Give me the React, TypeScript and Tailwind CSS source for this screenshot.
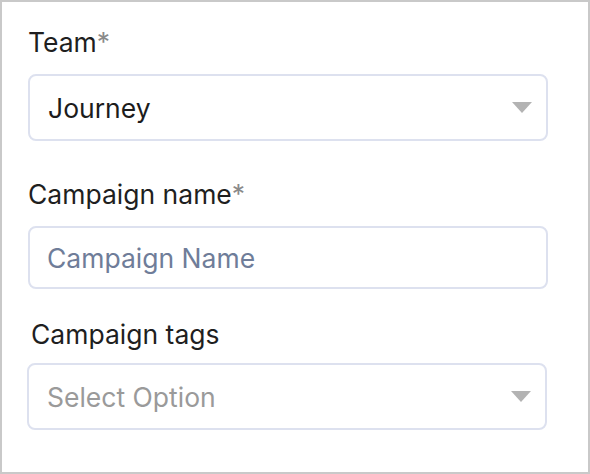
import React from "react"

function Caret() {
  return (
    <svg width="20" height="11" viewBox="0 0 20 11" className="shrink-0">
      <path d="M0 0 L20 0 L10 11 Z" fill="#b3b3b3" />
    </svg>
  )
}

function Label({ text, required, className = "" }: { text: string; required?: boolean; className?: string }) {
  return (
    <div className={`text-[26.5px] leading-[32px] text-[#1f1f1f] ${className}`}>
      {text}
      {required && <span className="text-[#8a8a8a]">*</span>}
    </div>
  )
}

export default function App() {
  return (
    <div
      className="w-[590px] h-[474px] border-2 border-[#c9c9c9] bg-white"
      style={{ fontFamily: "Inter, 'Noto Sans', sans-serif" }}
    >
      <div className="flex flex-col pl-[26px] pt-[24px]">
        {/* Team */}
        <Label text="Team" required />
        <div className="mt-[16px] flex h-[67px] w-[520px] items-center justify-between rounded-[8px] border-2 border-[#dde1ef] pl-[18px] pr-[14px]">
          <span className="text-[26.5px] leading-[32px] text-[#1c1c1c]">Journey</span>
          <Caret />
        </div>

        {/* Campaign name */}
        <Label text="Campaign name" required className="mt-[37px]" />
        <div className="mt-[16px] flex h-[63px] w-[520px] items-center rounded-[8px] border-2 border-[#dde1ef] pl-[17px]">
          <span className="text-[26.5px] leading-[32px] text-[#6f7d99]">Campaign Name</span>
        </div>

        {/* Campaign tags */}
        <Label text="Campaign tags" className="mt-[29px] ml-[3px]" />
        <div className="mt-[13px] flex h-[67px] w-[520px] items-center justify-between rounded-[8px] border-2 border-[#dde1ef] pl-[18px] pr-[14px] -ml-[1px]">
          <span className="text-[26.5px] leading-[32px] text-[#9a9a9a]">Select Option</span>
          <Caret />
        </div>
      </div>
    </div>
  )
}
